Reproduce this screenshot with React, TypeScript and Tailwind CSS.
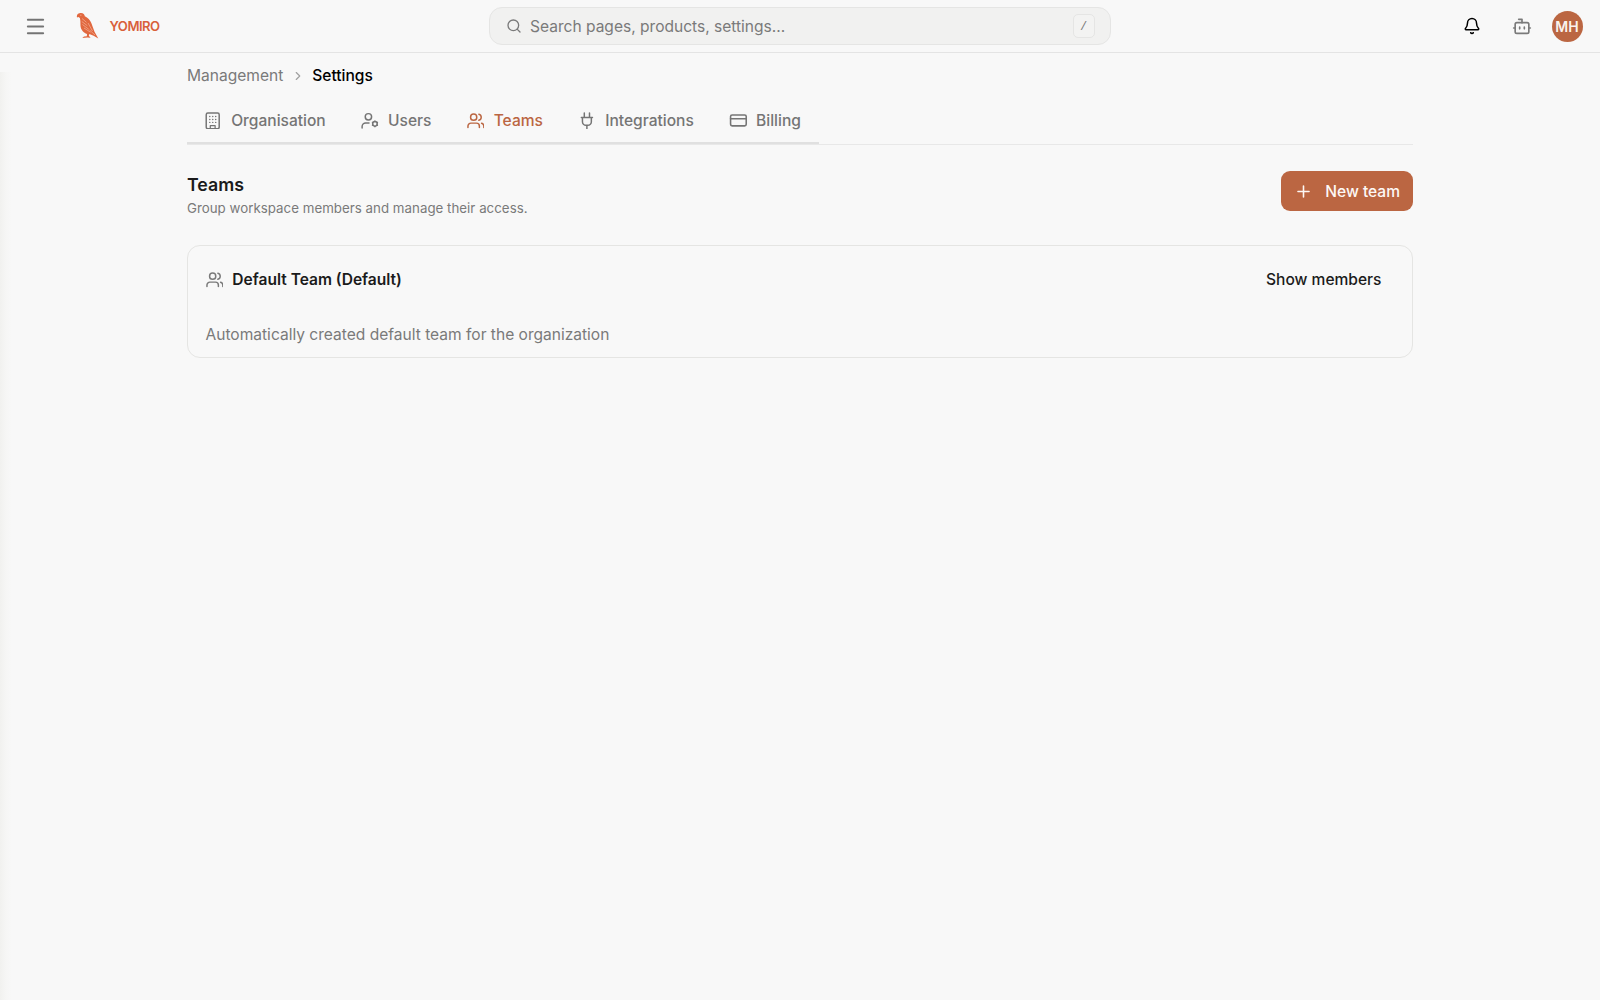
import type { ReactNode } from "react"
import { Bell, ChevronRight, CreditCard, Menu, Plus, Search } from "lucide-react"

function LineIcon({ children, size = 17.8, className = "" }: { children: ReactNode; size?: number; className?: string }) {
  return (
    <svg
      width={size} height={size} viewBox="0 0 24 24" fill="none" stroke="currentColor"
      strokeWidth={2} strokeLinecap="round" strokeLinejoin="round" className={`shrink-0 ${className}`}
    >
      {children}
    </svg>
  )
}

const UsersIcon = ({ className = "" }: { className?: string }) => (
  <LineIcon className={className}>
    <circle cx="9" cy="7" r="4.2" />
    <path d="M1.3 21v-2a4 4 0 0 1 4-4h7.4a4 4 0 0 1 4 4v2" />
    <path d="M16 2.93a4.2 4.2 0 0 1 0 8.15" />
    <path d="M22.7 21v-2a4 4 0 0 0-3-3.85" />
  </LineIcon>
)

const UserCogIcon = () => (
  <LineIcon>
    <circle cx="10" cy="6.5" r="4.3" />
    <path d="M1.5 21.5v-2a4.8 4.8 0 0 1 4.8-4.8h4.5" />
    <circle cx="18.8" cy="16" r="3.1" />
    <path d="M18.8 12v1M18.8 19v1M22.3 14l-.8.4M16.1 17.6l-.8.4M15.3 14l.8.4M21.5 17.6l.8.4" strokeWidth={1.6} />
  </LineIcon>
)

const OrgIcon = () => (
  <LineIcon>
    <rect x="3" y="1.5" width="17.5" height="21" rx="2.2" />
    <path d="M8.5 22v-3.5h6.5V22" strokeWidth={1.7} />
    <path d="M7.8 6h.01M11.8 6h.01M15.8 6h.01M7.8 10h.01M11.8 10h.01M15.8 10h.01M7.8 14h.01M11.8 14h.01M15.8 14h.01" />
  </LineIcon>
)

const PlugIcon = () => (
  <LineIcon>
    <path d="M12 22.8v-5M8.5 7V1.5M15.5 7V1.5M4.5 7.5h15M6 7.5V13a4.8 4.8 0 0 0 4.8 4.8h2.4A4.8 4.8 0 0 0 18 13V7.5" />
  </LineIcon>
)

const BotIcon = () => (
  <LineIcon size={20} className="text-[#7a7a7a]">
    <path d="M12 8V4H8" />
    <rect x="3.8" y="8" width="16.4" height="12.8" rx="2" />
    <path d="M2 14.4h1.8M20.2 14.4H22M9.2 13.4v2M14.8 13.4v2" />
  </LineIcon>
)

function FalconLogo() {
  return (
    <svg width="23" height="28" viewBox="0 0 23 28" className="shrink-0">
      <path d="M.8 4.2C1 2 3 .8 5 1c2.4 0 3.6 1.4 3.8 3.2 3 1.5 5.4 3.7 6.5 6.8l3.2 8.7 3.8 6.8-4.7-2.7-4.2-1.8-.6 1.8 1.8 1.9-3.3-.3-5 .7 1.7-1.6 2.8-.3.2-2.2c-3.4-1.2-6.2-4.4-6.5-8.1-.2-3 .1-5.1-.6-7.8L2.4 4.9 1 5.5z" fill="#e1683f" />
      <path d="M6 6.5l4.5 3.8M5.8 9.5l5.5 4.2M6.4 12.5l6.4 4.8M8 16l6.5 4.2M12 11l4.5 8M13.5 18l5.5 5M4 3.2h1.5" stroke="#f3b39b" strokeWidth=".7" fill="none" />
    </svg>
  )
}

const TABS = [
  { label: "Organisation", icon: <OrgIcon /> },
  { label: "Users", icon: <UserCogIcon /> },
  { label: "Teams", icon: <UsersIcon /> },
  { label: "Integrations", icon: <PlugIcon /> },
  { label: "Billing", icon: <CreditCard size={18.8} className="-mr-px" /> },
]

export default function App() {
  const activeTab = "Teams"

  return (
    <div className="relative min-h-screen bg-[#f8f8f8] font-['Inter',sans-serif] text-[15.56px] text-[#1b1b1b]">
      {/* Edge of the collapsed sidebar */}
      <div className="absolute top-[72px] bottom-0 left-0 w-[12px] bg-linear-to-r from-[#f1f1ef] via-[#f6f6f5] to-[#f8f8f8]" />

      {/* Top bar */}
      <header className="grid h-[53px] grid-cols-[489px_622px_1fr] items-center border-b border-[#e4e4e4]">
        <div className="flex items-center pl-[24px]">
          <Menu size={23} className="text-[#747474]" />
          <div className="ml-[29px] flex items-center gap-[10.5px]">
            <FalconLogo />
            <span className="pt-px text-[13.1px] font-semibold tracking-[-0.5px] text-[#d9603a]">YOMIRO</span>
          </div>
        </div>

        <div className="flex h-[38px] items-center rounded-[13px] border border-[#e5e5e4] bg-[#f1f1f0] pr-[15.5px] pl-[15.5px] text-[#7a7a7a]">
          <Search size={16} />
          <span className="ml-[8.5px] flex-1 pt-[2px]">Search pages, products, settings...</span>
          <kbd className="flex h-[24px] w-[22px] items-center justify-center rounded-[5px] border border-[#e5e5e4] bg-[#f3f3f2] pt-[2px] font-['Liberation_Mono',monospace] text-[12px]">/</kbd>
        </div>

        <div className="flex items-center justify-end pr-[17.5px]">
          <Bell size={18} className="text-black" />
          <div className="ml-[31px]"><BotIcon /></div>
          <div className="ml-[20px] flex h-[31px] w-[31px] items-center justify-center rounded-full bg-[#bb6642] text-[14px] font-semibold text-[#faf3ef]">
            MH
          </div>
        </div>
      </header>

      <main className="mx-auto w-[1226px]">
        <nav className="flex h-[46px] items-center">
          <span className="text-[#7a7a7a]">Management</span>
          <ChevronRight size={14} className="mx-[7.5px] text-[#a0a0a0]" />
          <span className="font-medium text-black">Settings</span>
        </nav>

        {/* Tabs */}
        <div className="flex h-[46px] items-start border-b border-[#e8e8e8]">
          <div className="flex h-[45px] border-b-2 border-[#e0e0e0]">
            {TABS.map(tab => (
              <button
                key={tab.label}
                className={`flex items-center gap-[9.3px] pr-[18.1px] pl-[17.1px] font-medium
                  ${tab.label === activeTab ? "text-[#bb6642]" : "text-[#757575]"}`}
              >
                {tab.icon}
                <span className="pt-px">{tab.label}</span>
              </button>
            ))}
          </div>
        </div>

        <div className="mt-[26px] flex items-start justify-between">
          <div>
            <h1 className="text-[17.8px] leading-[28px] font-semibold">Teams</h1>
            <p className="text-[13.3px] leading-[19px] tracking-[0.02px] text-[#7a7a7a]">Group workspace members and manage their access.</p>
          </div>
          <button className="flex h-[40px] w-[132px] items-center justify-between rounded-[9px] bg-[#bb6642] px-[13px] font-medium text-[#fdf8f5]">
            <Plus size={19} />
            <span className="pt-[2px]">New team</span>
          </button>
        </div>

        {/* Default team */}
        <section className="mt-[27px] h-[113px] rounded-[13px] border border-[#e5e5e3] px-[17.5px]">
          <div className="flex h-[67px] items-center">
            <UsersIcon className="text-[#7a7a7a]" />
            <h2 className="ml-[9px] flex-1 font-semibold">Default Team (Default)</h2>
            <button className="pr-[13px] font-medium">Show members</button>
          </div>
          <p className="mt-[10px] text-[#7a7a7a]">Automatically created default team for the organization</p>
        </section>
      </main>
    </div>
  )
}
